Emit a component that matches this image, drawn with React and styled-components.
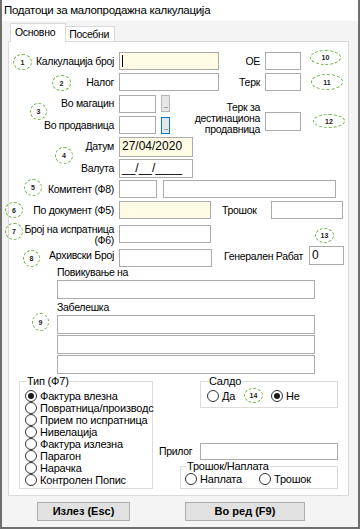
import React from 'react';
import styled, { createGlobalStyle } from 'styled-components';

// Retail calculation dialog, "Основно" tab. Numbered green rings are annotations laid over the form.

const GlobalStyle = createGlobalStyle`
  html, body { margin: 0; padding: 0; background: #fff; }
  body {
    font-family: "Liberation Sans", Arial, sans-serif;
    font-size: 10.5px;
    letter-spacing: -0.3px;
    color: #000;
  }
  * { box-sizing: border-box; }
`;

const Window = styled.div`
  width: 360px;
  height: 529px;
  border: 2px solid #6f6f6f;
  border-top: none;
  background: #f4f4f4;
  display: flex;
  flex-direction: column;
`;

const TitleBar = styled.div`
  height: 21px;
  background: #fff;
  padding: 3px 0 0 2px;
  font-size: 11.5px;
  line-height: 14px;
`;

const TabStrip = styled.div`
  height: 20px;
  display: flex;
  align-items: flex-end;
  padding-left: 8px;
`;

const Tab = styled.div`
  height: ${p => (p.$active ? 19 : 15)}px;
  padding: 0 ${p => (p.$active ? 10 : 5)}px 0 ${p => (p.$active ? 4 : 3)}px;
  line-height: ${p => (p.$active ? 17 : 14)}px;
  background: #fff;
  border: 1px solid #d9d9d9;
  border-bottom: none;
  margin-left: ${p => (p.$active ? 0 : -1)}px;
  position: relative;
  top: ${p => (p.$active ? 1 : 0)}px;
  z-index: ${p => (p.$active ? 2 : 1)};
`;

const Panel = styled.div`
  margin: 0 9px 0 6px;
  border: 1px solid #dadada;
  background: #fff;
  position: relative;
  padding: 10px 0 6px 0;
`;

const TopGrid = styled.div`
  display: grid;
  grid-template-columns: 105px 100px 36px 36px;
  grid-template-rows: 18px 18px 19px 18px 19px 19px;
  column-gap: 5px;
  row-gap: 3px;
  align-items: center;
`;

const Label = styled.div`
  text-align: right;
  white-space: nowrap;
  line-height: 11px;
  grid-area: ${p => p.$at || 'auto'};
  justify-self: ${p => p.$justify || 'stretch'};
  align-self: ${p => p.$alignSelf || 'center'};
  margin-bottom: ${p => p.$mb || 0}px;
`;

const Field = styled.div`
  width: ${p => p.$w}px;
  height: ${p => p.$h || 18}px;
  flex-shrink: 0;
  border: 1px solid #ababab;
  background: ${p => (p.$yellow ? '#fffbe4' : '#fff')};
  font-size: 12px;
  letter-spacing: 0;
  line-height: 16px;
  padding-left: 2px;
  margin-top: ${p => p.$mt || 0}px;
  margin-left: ${p => p.$ml || 0}px;
  grid-area: ${p => p.$at || 'auto'};
  align-self: ${p => p.$alignSelf || 'auto'};
  margin-bottom: ${p => p.$mb || 0}px;
  white-space: nowrap;
  overflow: hidden;
`;

const Caret = styled.span`
  display: inline-block;
  width: 1px;
  height: 12px;
  background: #000;
  vertical-align: -2px;
`;

const PickRow = styled.div`
  display: flex;
  align-items: center;
  gap: 5px;
  grid-area: ${p => p.$at};
`;

const DotsButton = styled.div`
  width: 9px;
  height: 17px;
  border: 1px solid ${p => (p.$focused ? '#0078d7' : '#b5b5b5')};
  background: #e6e6e6;
  font-size: 8px;
  line-height: 20px;
  text-align: center;
  color: #444;
  letter-spacing: -1px;
`;

const Row = styled.div`
  display: flex;
  align-items: ${p => p.$align || 'center'};
  height: ${p => p.$h}px;
  margin-top: ${p => p.$mt || 0}px;
`;

const RowLabel = styled.div`
  width: 105px;
  margin-right: 5px;
  margin-top: ${p => p.$mt || 0}px;
  flex-shrink: 0;
  text-align: right;
  white-space: nowrap;
  line-height: 11px;
`;

const SideLabel = styled.div`
  width: ${p => p.$w}px;
  margin-left: ${p => p.$ml}px;
  margin-top: ${p => p.$mt || 0}px;
  flex-shrink: 0;
  white-space: nowrap;
  line-height: 11px;
`;

const Notes = styled.div`
  margin-left: 48px;
  display: flex;
  flex-direction: column;
  gap: 1px;
`;

const NoteLabel = styled.div`
  line-height: 11px;
  margin-top: ${p => p.$mt || 0}px;
  margin-bottom: 1px;
`;

const Bottom = styled.div`
  display: flex;
  align-items: flex-start;
  margin-top: 1px;
`;

const Group = styled.fieldset`
  margin: ${p => p.$mt || 0}px 0 0 ${p => p.$ml}px;
  width: ${p => p.$w}px;
  min-width: 0;
  padding: ${p => p.$pad};
  border: 1px solid #dcdcdc;
`;

const Legend = styled.legend`
  padding: 0 1px;
  margin-left: 1px;
  line-height: 12px;
  font-size: 11px;
  letter-spacing: -0.2px;
`;

const RadioList = styled.div`
  display: flex;
  flex-direction: ${p => (p.$row ? 'row' : 'column')};
`;

const RadioItem = styled.div`
  display: flex;
  align-items: center;
  gap: 3px;
  height: 12px;
  width: ${p => (p.$w ? `${p.$w}px` : 'auto')};
  white-space: nowrap;
  font-size: 11px;
  letter-spacing: -0.2px;
`;

const RadioDot = styled.span`
  width: 12px;
  height: 12px;
  flex-shrink: 0;
  border-radius: 50%;
  border: 1px solid #333;
  background: #fff;
  display: flex;
  align-items: center;
  justify-content: center;
  &::after {
    content: '';
    width: 6px;
    height: 6px;
    border-radius: 50%;
    background: ${p => (p.$checked ? '#1b1b1b' : 'transparent')};
  }
`;

const RightCol = styled.div`
  margin-left: 6px;
  width: 179px;
  display: flex;
  flex-direction: column;
`;

const AttachRow = styled.div`
  display: flex;
  align-items: center;
  margin-top: 35px;
  height: 17px;
`;

const ButtonBar = styled.div`
  display: flex;
  gap: 55px;
  padding-left: 35px;
  margin-top: 6px;
`;

const Button = styled.div`
  width: ${p => p.$w}px;
  height: 19px;
  background: #e1e1e1;
  border: 1px solid #adadad;
  font-weight: bold;
  font-size: 11px;
  letter-spacing: 0;
  line-height: 17px;
  text-align: center;
`;

const Marker = styled.span`
  position: absolute;
  left: ${p => p.$x}px;
  top: ${p => p.$y}px;
  width: ${p => p.$w}px;
  height: ${p => p.$h}px;
  border: 1px dashed #6fb043;
  border-radius: 50%;
  display: flex;
  align-items: center;
  justify-content: center;
  font-size: 7px;
  font-weight: bold;
  letter-spacing: 0;
  color: #222;
  pointer-events: none;
`;

const markers = [
  { n: 1, x: 4, y: 12, w: 19, h: 16 },
  { n: 2, x: 43, y: 33, w: 19, h: 16 },
  { n: 3, x: 21, y: 61, w: 17, h: 17 },
  { n: 4, x: 46, y: 105, w: 18, h: 17 },
  { n: 5, x: 15, y: 137, w: 18, h: 17 },
  { n: 6, x: -4, y: 160, w: 18, h: 16 },
  { n: 7, x: -4, y: 181, w: 18, h: 17 },
  { n: 8, x: 14, y: 208, w: 17, h: 17 },
  { n: 9, x: 23, y: 271, w: 17, h: 18 },
  { n: 10, x: 301, y: 8, w: 31, h: 15 },
  { n: 11, x: 302, y: 32, w: 32, h: 16 },
  { n: 12, x: 304, y: 72, w: 32, h: 14 },
  { n: 13, x: 306, y: 186, w: 19, h: 15 },
  { n: 14, x: 235, y: 346, w: 19, h: 15 },
];

const docTypes = [
  'Фактура влезна',
  'Повратница/производс',
  'Прием по испратница',
  'Нивелација',
  'Фактура излезна',
  'Парагон',
  'Нарачка',
  'Контролен Попис',
];

const Radio = ({ checked, w, children }) => (
  <RadioItem $w={w}>
    <RadioDot $checked={checked} />
    {children}
  </RadioItem>
);

export default function App() {
  return (
    <>
      <GlobalStyle />
      <Window>
        <TitleBar>Податоци за малопродажна калкулација</TitleBar>
        <TabStrip>
          <Tab $active>Основно</Tab>
          <Tab>Посебни</Tab>
        </TabStrip>

        <Panel>
          <TopGrid>
            <Label $at="1 / 1">Калкулација број</Label>
            <Field $at="1 / 2" $w={100} $yellow><Caret /></Field>
            <Label $at="1 / 3" $justify="end">ОЕ</Label>
            <Field $at="1 / 4" $w={36} />

            <Label $at="2 / 1">Налог</Label>
            <Field $at="2 / 2" $w={100} />
            <Label $at="2 / 3" $justify="end">Терк</Label>
            <Field $at="2 / 4" $w={36} />

            <Label $at="3 / 1">Во магацин</Label>
            <PickRow $at="3 / 2">
              <Field $w={37} />
              <DotsButton>...</DotsButton>
            </PickRow>
            <Label $at="4 / 1">Во продавница</Label>
            <PickRow $at="4 / 2">
              <Field $w={37} />
              <DotsButton $focused>...</DotsButton>
            </PickRow>
            <Label $at="3 / 2 / 5 / 4" $justify="end" $alignSelf="end" $mb={-1}>
              Терк за<br />дестинациона<br />продавница
            </Label>
            <Field $at="3 / 4 / 5 / 5" $w={36} $h={19} $alignSelf="end" $mb={3} />

            <Label $at="5 / 1">Датум</Label>
            <Field $at="5 / 2" $w={74} $h={20} $yellow>27/04/2020</Field>
            <Label $at="6 / 1">Валута</Label>
            <Field $at="6 / 2" $w={74} $h={19}>__/__/____</Field>
          </TopGrid>

          <Row $h={18} $mt={2}>
            <RowLabel>Комитент (Ф8)</RowLabel>
            <Field $w={38} />
            <Field $w={173} $ml={6} />
          </Row>

          <Row $h={18} $mt={3}>
            <RowLabel>По документ (Ф5)</RowLabel>
            <Field $w={92} $yellow />
            <SideLabel $w={49} $ml={11}>Трошок</SideLabel>
            <Field $w={72} />
          </Row>

          <Row $h={22} $mt={5} $align="flex-start">
            <RowLabel>Број на испратница<br />(Ф6)</RowLabel>
            <Field $w={92} $mt={1} />
          </Row>

          <Row $h={21} $align="flex-start">
            <RowLabel $mt={4}>Архивски Број</RowLabel>
            <Field $w={93} $mt={3} />
            <SideLabel $w={85} $ml={12} $mt={5}>Генерален Рабат</SideLabel>
            <Field $w={35} $h={19}>0</Field>
          </Row>

          <Notes>
            <NoteLabel>Повикување на</NoteLabel>
            <Field $w={258} $h={19} />
            <NoteLabel $mt={2}>Забелешка</NoteLabel>
            <Field $w={258} $h={19} />
            <Field $w={258} $h={19} />
            <Field $w={258} $h={19} />
          </Notes>

          <Bottom>
            <Group $ml={10} $w={134} $pad="3px 0 2px 5px">
              <Legend>Тип (Ф7)</Legend>
              <RadioList>
                {docTypes.map((t, i) => (
                  <Radio key={t} checked={i === 0}>{t}</Radio>
                ))}
              </RadioList>
            </Group>

            <RightCol>
              <Group $ml={41} $w={138} $pad="3px 0 5px 6px">
                <Legend>Салдо</Legend>
                <RadioList $row>
                  <Radio w={64}>Да</Radio>
                  <Radio checked>Не</Radio>
                </RadioList>
              </Group>

              <AttachRow>
                <SideLabel $w={41} $ml={0}>Прилог</SideLabel>
                <Field $w={138} $h={17} />
              </AttachRow>

              <Group $ml={21} $w={158} $pad="1px 0 3px 4px">
                <Legend>Трошок/Наплата</Legend>
                <RadioList $row>
                  <Radio w={74}>Наплата</Radio>
                  <Radio>Трошок</Radio>
                </RadioList>
              </Group>
            </RightCol>
          </Bottom>

          {markers.map(m => (
            <Marker key={m.n} $x={m.x} $y={m.y} $w={m.w} $h={m.h}>{m.n}</Marker>
          ))}
        </Panel>

        <ButtonBar>
          <Button $w={93}>Излез (Esc)</Button>
          <Button $w={120}>Во ред (F9)</Button>
        </ButtonBar>
      </Window>
    </>
  );
}
